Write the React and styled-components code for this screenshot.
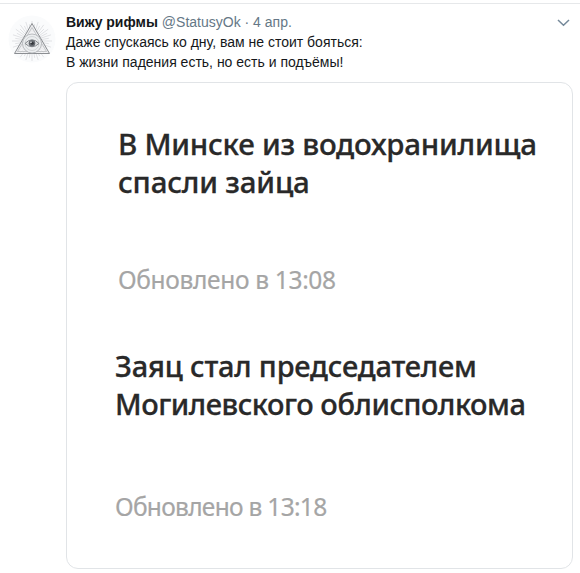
import React from 'react';
import styled, { createGlobalStyle } from 'styled-components';

const rays = Array.from({ length: 40 }, (_, i) => {
    const angle = (i * Math.PI) / 20;
    const outer = i % 2 ? 17 : 20;
    return {
        x1: 24 + 9 * Math.cos(angle),
        y1: 26 + 9 * Math.sin(angle),
        x2: 24 + outer * Math.cos(angle),
        y2: 26 + outer * Math.sin(angle),
    };
});

const news = [
    {
        lines: [
            { text: 'В Минске из водохранилища', spacing: -0.25 },
            { text: 'спасли зайца', spacing: -0.2 },
        ],
        updated: { text: 'Обновлено в 13:08', spacing: -0.33, offset: 63 },
        indent: 51,
        size: 29.5,
    },
    {
        lines: [
            { text: 'Заяц стал председателем', spacing: -0.18 },
            { text: 'Могилевского облисполкома', spacing: -0.44 },
        ],
        updated: { text: 'Обновлено в 13:18', spacing: -0.7, offset: 68 },
        indent: 48,
        size: 29,
    },
];

const AvatarIcon = () => (
    <svg width="48" height="48" viewBox="0 0 48 48" fill="none">
        <circle cx="24" cy="24" r="23.5" fill="#fafbfc" />
        <g stroke="#d0d2d5" strokeWidth="0.6">
            {rays.map((ray, i) => <line key={i} {...ray} />)}
        </g>
        <path d="M24 8.5 41.5 38.5H6.5Z" fill="#eeeff0" fillOpacity="0.6" stroke="#8b8e92" strokeWidth="1" />
        <path d="M24 12.5 38.5 36.5H9.5Z" stroke="#b2b4b8" strokeWidth="0.7" />
        <circle cx="24" cy="28.5" r="9.5" fill="#eceef0" stroke="#a9acb0" strokeWidth="0.8" />
        <circle cx="24" cy="28.5" r="7" stroke="#c0c2c5" strokeWidth="0.6" />
        <path d="M17 28.5Q24 21 31 28.5Q24 35 17 28.5Z" fill="#dfe1e3" stroke="#7d8085" strokeWidth="0.9" />
        <circle cx="24" cy="28.2" r="3.3" fill="#666a70" />
        <circle cx="24.3" cy="28.2" r="1.5" fill="#33363b" />
        <circle cx="23" cy="27.2" r="0.8" fill="#e8eaec" />
    </svg>
);

const App = () => (
    <>
        <GlobalStyle />
        <Tweet>
            <Avatar>
                <AvatarIcon />
            </Avatar>
            <Body>
                <Header>
                    <Name>Вижу рифмы</Name>
                    <Meta>@StatusyOk · 4 апр.</Meta>
                    <Caret width="13" height="8" viewBox="0 0 13 8" fill="none">
                        <path d="M1 1 6.5 6.3 12 1" stroke="#75899a" strokeWidth="1.5" />
                    </Caret>
                </Header>
                <Text>
                    Даже спускаясь ко дну, вам не стоит бояться:
                    <br />
                    В жизни падения есть, но есть и подъёмы!
                </Text>
                <Card>
                    {news.map((item) => (
                        <Article key={item.updated.text} $indent={item.indent}>
                            <Title $size={item.size}>
                                {item.lines.map((line) => (
                                    <TitleLine key={line.text} $spacing={line.spacing}>{line.text}</TitleLine>
                                ))}
                            </Title>
                            <Updated $spacing={item.updated.spacing} $offset={item.updated.offset}>
                                {item.updated.text}
                            </Updated>
                        </Article>
                    ))}
                </Card>
            </Body>
        </Tweet>
    </>
);

export default App;

const GlobalStyle = createGlobalStyle`
    * {
        box-sizing: border-box;
    }
    body {
        margin: 0;
        background: #fff;
        font-family: "Liberation Sans", Arial, sans-serif;
    }
`;

const Tweet = styled.article`
    display: flex;
    width: 580px;
    height: 570px;
    margin-top: 3px;
    padding: 9px 7px 0 8px;
    border-top: 1px solid #e6e8ea;
`;

const Avatar = styled.div`
    flex: none;
    width: 58px;
    padding-top: 2px;
`;

const Body = styled.div`
    flex: 1;
    min-width: 0;
`;

const Header = styled.header`
    display: flex;
    align-items: center;
    height: 19px;
    font-size: 14px;
    line-height: 19px;
    white-space: nowrap;
`;

const Name = styled.strong`
    margin-right: 4px;
    color: #14171a;
`;

const Meta = styled.span`
    color: #657786;
`;

const Caret = styled.svg`
    margin: 0 3px 0 auto;
`;

const Text = styled.p`
    margin: 0;
    color: #14171a;
    font-size: 14px;
    line-height: 20px;
`;

const Card = styled.section`
    height: 487px;
    margin-top: 10px;
    padding-top: 42px;
    border: 1px solid #e1e4e7;
    border-radius: 12px;
    font-family: "Noto Sans", sans-serif;
    white-space: nowrap;
`;

const Article = styled.div`
    height: 222px;
    padding-left: ${props => props.$indent}px;
`;

const Title = styled.h2`
    margin: 0;
    color: #292929;
    font-size: ${props => props.$size}px;
    font-weight: 500;
    line-height: 38px;
    -webkit-text-stroke: 0.3px #292929;
`;

const TitleLine = styled.span`
    display: block;
    width: max-content;
    letter-spacing: ${props => props.$spacing}px;
`;

const Updated = styled.div`
    margin-top: ${props => props.$offset}px;
    color: #a5a5a5;
    font-size: 24.5px;
    line-height: 32px;
    letter-spacing: ${props => props.$spacing}px;
    -webkit-text-stroke: 0.2px #a5a5a5;
`;
